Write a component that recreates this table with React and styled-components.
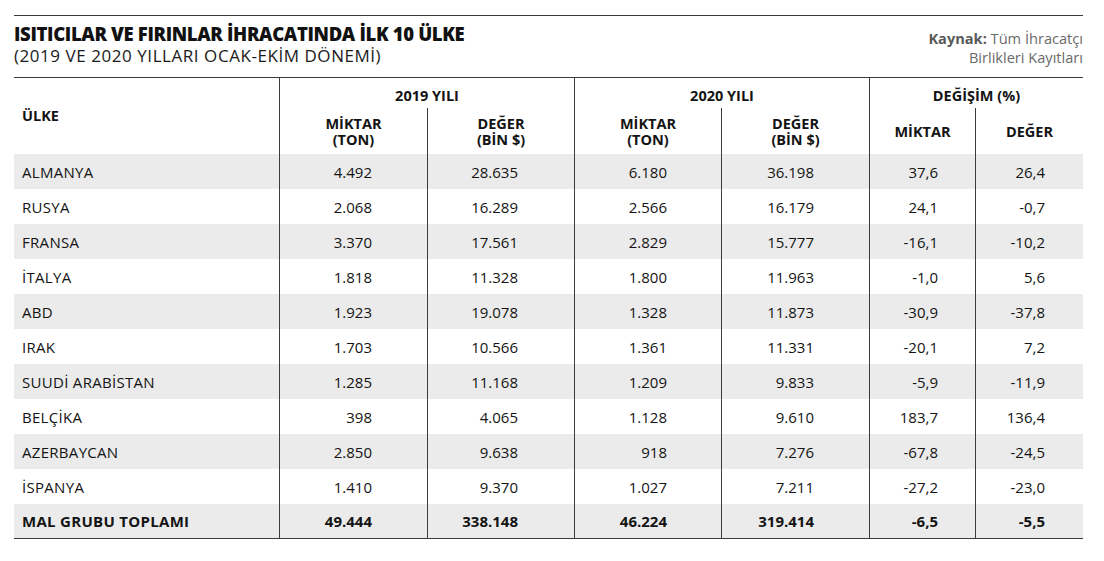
import React from "react";
import styled, { createGlobalStyle } from "styled-components";

const Global = createGlobalStyle`
  html, body { margin: 0; padding: 0; background: #fff; }
  body { font-family: "Open Sans", "Noto Sans", sans-serif; color: #141414; }
`;

const COLS = "266px 148px 147px 147px 148px 106px 107px";
const LINE = "#3c3c3c";

const Page = styled.div`
  width: 1069px;
  padding: 15px 0 0 14px;
`;

const Header = styled.header`
  display: flex;
  justify-content: space-between;
  align-items: flex-start;
  height: 63px;
  border-top: 1px solid ${LINE};
  border-bottom: 1px solid ${LINE};
  box-sizing: border-box;
`;

const TitleBlock = styled.div`
  padding-top: 6px;
`;

const Title = styled.h1`
  margin: 0;
  font-size: 18.5px;
  line-height: 24px;
  font-weight: 800;
  letter-spacing: -0.35px;
  color: #111;
`;

const Subtitle = styled.div`
  font-size: 17px;
  line-height: 21px;
  font-weight: 400;
  letter-spacing: 0.55px;
  color: #1a1a1a;
  margin-top: -1px;
`;

const Source = styled.div`
  padding-top: 13px;
  text-align: right;
  font-size: 14.6px;
  line-height: 19px;
  color: #6a6a6a;
  b { font-weight: 700; color: #5a5a5a; }
`;

const Grid = styled.div`
  display: grid;
  grid-template-columns: ${COLS};
`;

const HeadGrid = styled(Grid)`
  grid-template-rows: 30px 46px;
`;

const HeadCell = styled.div`
  grid-column: ${(p) => p.$col};
  grid-row: ${(p) => p.$row};
  display: flex;
  align-items: ${(p) => (p.$top ? "flex-end" : "center")};
  justify-content: ${(p) => (p.$left ? "flex-start" : "center")};
  padding-left: ${(p) => (p.$left ? "8px" : "0")};
  padding-bottom: ${(p) => (p.$top ? "4px" : "0")};
  padding-top: ${(p) => (p.$sub ? "2px" : "0")};
  border-right: ${(p) => (p.$edge ? `1px solid ${LINE}` : "none")};
  font-size: 14.5px;
  line-height: 16.5px;
  font-weight: 700;
  text-align: center;
  color: #141414;
`;

const Row = styled(Grid)`
  height: 35px;
  background: ${(p) => (p.$shade ? "#ebebeb" : "#fff")};
  border-bottom: ${(p) => (p.$last ? `1px solid ${LINE}` : "none")};
  box-sizing: border-box;
  font-weight: ${(p) => (p.$bold ? 700 : 400)};
`;

const Cell = styled.div`
  display: flex;
  align-items: center;
  justify-content: ${(p) => (p.$left ? "flex-start" : "flex-end")};
  padding: ${(p) => (p.$left ? "0 0 0 8px" : `0 ${p.$pad}px 0 0`)};
  border-right: ${(p) => (p.$edge ? `1px solid ${LINE}` : "none")};
  font-size: 15px;
  letter-spacing: ${(p) => (p.$left ? "0.3px" : "0")};
  color: #141414;
  white-space: nowrap;
`;

const data = [
  ["ALMANYA", "4.492", "28.635", "6.180", "36.198", "37,6", "26,4"],
  ["RUSYA", "2.068", "16.289", "2.566", "16.179", "24,1", "-0,7"],
  ["FRANSA", "3.370", "17.561", "2.829", "15.777", "-16,1", "-10,2"],
  ["İTALYA", "1.818", "11.328", "1.800", "11.963", "-1,0", "5,6"],
  ["ABD", "1.923", "19.078", "1.328", "11.873", "-30,9", "-37,8"],
  ["IRAK", "1.703", "10.566", "1.361", "11.331", "-20,1", "7,2"],
  ["SUUDİ ARABİSTAN", "1.285", "11.168", "1.209", "9.833", "-5,9", "-11,9"],
  ["BELÇİKA", "398", "4.065", "1.128", "9.610", "183,7", "136,4"],
  ["AZERBAYCAN", "2.850", "9.638", "918", "7.276", "-67,8", "-24,5"],
  ["İSPANYA", "1.410", "9.370", "1.027", "7.211", "-27,2", "-23,0"],
  ["MAL GRUBU TOPLAMI", "49.444", "338.148", "46.224", "319.414", "-6,5", "-5,5"],
];

const pads = [0, 55, 56, 54, 55, 37, 38];

export default function App() {
  return (
    <Page>
      <Global />
      <Header>
        <TitleBlock>
          <Title>ISITICILAR VE FIRINLAR İHRACATINDA İLK 10 ÜLKE</Title>
          <Subtitle>(2019 VE 2020 YILLARI OCAK-EKİM DÖNEMİ)</Subtitle>
        </TitleBlock>
        <Source>
          <b>Kaynak:</b> Tüm İhracatçı
          <br />
          Birlikleri Kayıtları
        </Source>
      </Header>
      <HeadGrid>
        <HeadCell $col="1" $row="1 / 3" $left $edge>ÜLKE</HeadCell>
        <HeadCell $col="2 / 4" $row="1" $top $edge>2019 YILI</HeadCell>
        <HeadCell $col="4 / 6" $row="1" $top $edge>2020 YILI</HeadCell>
        <HeadCell $col="6 / 8" $row="1" $top>DEĞİŞİM (%)</HeadCell>
        <HeadCell $col="2" $row="2" $sub $edge>MİKTAR<br />(TON)</HeadCell>
        <HeadCell $col="3" $row="2" $sub $edge>DEĞER<br />(BİN $)</HeadCell>
        <HeadCell $col="4" $row="2" $sub $edge>MİKTAR<br />(TON)</HeadCell>
        <HeadCell $col="5" $row="2" $sub $edge>DEĞER<br />(BİN $)</HeadCell>
        <HeadCell $col="6" $row="2" $sub $edge>MİKTAR</HeadCell>
        <HeadCell $col="7" $row="2" $sub>DEĞER</HeadCell>
      </HeadGrid>
      {data.map((r, i) => (
        <Row
          key={r[0]}
          $shade={i % 2 === 0}
          $last={i === data.length - 1}
          $bold={i === data.length - 1}
        >
          {r.map((v, j) => (
            <Cell key={j} $left={j === 0} $pad={pads[j]} $edge={j < 6}>
              {v}
            </Cell>
          ))}
        </Row>
      ))}
    </Page>
  );
}
